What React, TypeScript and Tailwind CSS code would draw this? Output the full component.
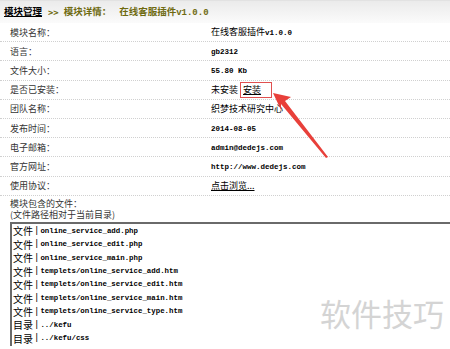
import React from "react";

const cjk = { fontFamily: '"Noto Sans CJK SC", "Noto Sans", sans-serif' };
const mono = { fontFamily: '"Liberation Mono", "Noto Sans CJK SC", monospace' };

const M = ({ children }: { children: React.ReactNode }) => (
  <span style={mono} className="text-[7.5px] font-semibold">{children}</span>
);

const rows: { label: string; value: React.ReactNode }[] = [
  { label: "模块名称：", value: <span>在线客服插件<M>v1.0.0</M></span> },
  { label: "语言：", value: <M>gb2312</M> },
  { label: "文件大小：", value: <M>55.80 Kb</M> },
  {
    label: "是否已安装：",
    value: (
      <span className="flex items-center">
        未安装
        <span className="ml-[2px] border border-[#e05050] pl-[2px] h-[16px] w-[32px] flex items-center">
          <span className="underline">安装</span>
        </span>
      </span>
    ),
  },
  { label: "团队名称：", value: "织梦技术研究中心" },
  { label: "发布时间：", value: <M>2014-08-05</M> },
  { label: "电子邮箱：", value: <M>admin@dedejs.com</M> },
  { label: "官方网址：", value: <M>http://www.dedejs.com</M> },
  { label: "使用协议：", value: <span className="underline">点击浏览...</span> },
];

const files = [
  ["文件", "online_service_add.php"],
  ["文件", "online_service_edit.php"],
  ["文件", "online_service_main.php"],
  ["文件", "templets/online_service_add.htm"],
  ["文件", "templets/online_service_edit.htm"],
  ["文件", "templets/online_service_main.htm"],
  ["文件", "templets/online_service_type.htm"],
  ["目录", "../kefu"],
  ["目录", "../kefu/css"],
];

export default function App() {
  return (
    <div className="relative w-[450px] h-[349px] overflow-hidden bg-white text-[9px] leading-none text-[#222]" style={cjk}>
      <div className="h-[23px] flex items-center pl-[4px] border-t border-[#e2e2e2] bg-gradient-to-b from-[#ebebeb] to-[#fbfbfb] font-bold">
        <span className="underline text-black text-[9.5px]">模块管理</span>
        <span className="ml-[6px] text-[#6e6a10]">&gt;&gt;</span>
        <span className="ml-[5px] text-[#6e6a10] text-[9.5px]">模块详情：</span>
        <span className="ml-[8px] text-[#6e6a10] text-[9.5px]">在线客服插件<span style={mono} className="text-[9px]">v1.0.0</span></span>
      </div>
      {rows.map((r, i) => (
        <div key={i} className="h-[19.2px] flex items-center border-b border-dotted border-[#d0d0d0]">
          <div className="w-[211px] pl-[10px] text-[#333]">{r.label}</div>
          <div className="text-black">{r.value}</div>
        </div>
      ))}
      <div className="pl-[10px] pt-[2px] text-[#333]">
        <div className="h-[11px] flex items-center">模块包含的文件：</div>
        <div className="h-[11px] flex items-center">(文件路径相对于当前目录)</div>
      </div>
      <div className="ml-[10px] mt-[2px] border-t-2 border-l-2 border-[#6a6a6a] pl-[1px] pt-[1px]">
        {files.map((f, i) => (
          <div key={i} className="h-[13.45px] flex items-center text-black">
            <span className="text-[10px]">{f[0]}</span>
            <span className="mx-[1px] text-[9px]" style={mono}>|</span>
            <span style={mono} className="text-[7.4px] font-semibold">{f[1]}</span>
          </div>
        ))}
      </div>
      <div className="absolute left-[320px] top-[293px] text-[31px] leading-[40px] text-[#d4d4d4]" style={cjk}>
        软件技巧
      </div>
      <svg className="absolute left-0 top-0" width="450" height="349">
        <polygon points="273,93 291,97 285,101 328,157 326,158 281,104 281,110" fill="#e8403a" />
      </svg>
    </div>
  );
}
